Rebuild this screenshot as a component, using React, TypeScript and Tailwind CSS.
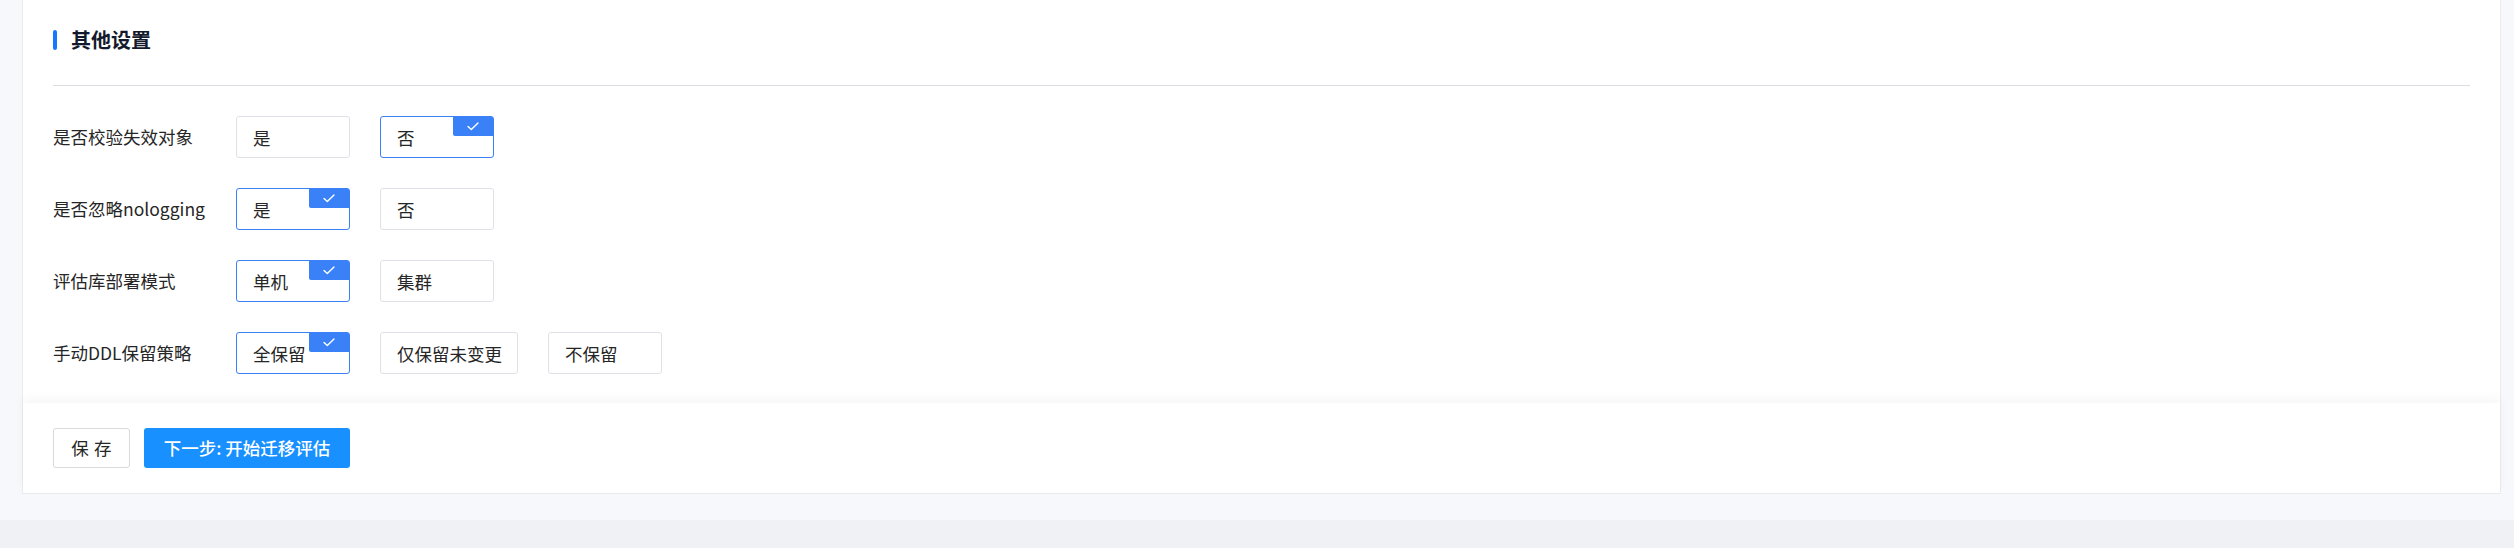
import React from "react";

type Option = { label: string; width?: string };

type SettingRow = {
    title: string;
    options: Option[];
    selected: number;
};

const rows: SettingRow[] = [
    { title: "是否校验失效对象", options: [{ label: "是" }, { label: "否" }], selected: 1 },
    { title: "是否忽略nologging", options: [{ label: "是" }, { label: "否" }], selected: 0 },
    { title: "评估库部署模式", options: [{ label: "单机" }, { label: "集群" }], selected: 0 },
    {
        title: "手动DDL保留策略",
        options: [{ label: "全保留" }, { label: "仅保留未变更", width: "w-[138px]" }, { label: "不保留" }],
        selected: 0,
    },
];

function CheckBadge() {
    return (
        <span className="absolute top-0 right-0 w-[40px] h-[19px] bg-[#3a80f6] rounded-bl-[2px] flex items-center justify-center">
            <svg width="12" height="9" viewBox="0 0 12 9" fill="none">
                <path d="M1 4.5L4.3 7.6L11 1" stroke="white" strokeWidth="1.4" strokeLinecap="round" strokeLinejoin="round" />
            </svg>
        </span>
    );
}

function OptionBox(props: { option: Option; active: boolean }) {
    const { option, active } = props;
    return (
        <div
            className={`relative ${option.width ?? "w-[114px]"} h-[42px] rounded-[3px] border pl-[16px] pt-[2px] flex items-center text-[17.5px] text-[#262626] bg-white ${
                active ? "border-[#3a80f6]" : "border-[#dfe1e6]"
            }`}
        >
            {option.label}
            {active && <CheckBadge />}
        </div>
    );
}

export default function App() {
    return (
        <div
            className="w-full h-[548px] bg-[#f0f1f5] flex flex-col"
            style={{ fontFamily: '"Noto Sans CJK SC", "Noto Sans", sans-serif' }}
        >
            <div className="h-[520px] bg-[#f7f8fb] pl-[22px] pr-[13px] pb-[26px] flex">
                <div className="flex-1 bg-white border-x border-b border-[#e9ebef] flex flex-col">
                    {/* Body */}
                    <div className="flex-1 px-[30px] pt-[30px]">
                        <div className="flex items-center h-[20px] gap-[14px]">
                            <div className="w-[4px] h-[20px] rounded-full bg-[#1677ff]"></div>
                            <h2 className="text-[20px] leading-[20px] font-bold text-[#141a2e]">其他设置</h2>
                        </div>
                        <div className="mt-[35px] h-px bg-[#dcdde2]"></div>
                        <div className="mt-[30px] flex flex-col gap-[30px]">
                            {rows.map((row) => (
                                <div key={row.title} className="flex items-center h-[42px]">
                                    <div className="w-[183px] text-[17.5px] text-[#262626]">{row.title}</div>
                                    <div className="flex gap-[30px]">
                                        {row.options.map((opt, i) => (
                                            <OptionBox key={opt.label} option={opt} active={i === row.selected} />
                                        ))}
                                    </div>
                                </div>
                            ))}
                        </div>
                    </div>

                    {/* Footer */}
                    <div className="h-[90px] px-[30px] pt-[25px] flex items-start gap-[14px] shadow-[0_-5px_10px_rgba(0,0,0,0.035)]">
                        <button className="w-[77px] h-[40px] rounded-[3px] border border-[#d9d9d9] bg-white text-[17.5px] text-[#262626] tracking-[0.3em] pl-[5px]">
                            保存
                        </button>
                        <button className="w-[206px] h-[40px] rounded-[3px] bg-[#1890ff] text-[17.5px] font-medium text-white">
                            下一步: 开始迁移评估
                        </button>
                    </div>
                </div>
            </div>
        </div>
    );
}
